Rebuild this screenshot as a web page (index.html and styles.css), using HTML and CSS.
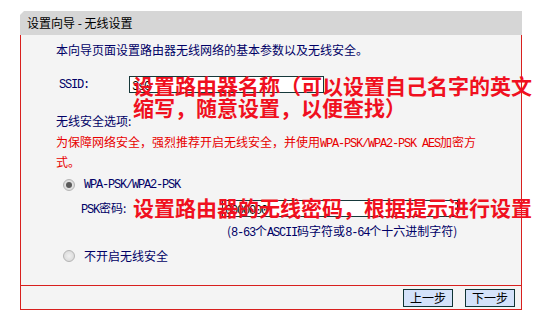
FILE: index.html
```html
<!DOCTYPE html>
<html lang="zh-CN">
<head>
    <meta charset="UTF-8">
    <title>设置向导 - 无线设置</title>
    <link rel="stylesheet" href="styles.css">
</head>
<body>

    <div class="panel">
        <div class="title">设置向导 - 无线设置</div>

        <div class="content">
            <p class="intro">本向导页面设置路由器无线网络的基本参数以及无线安全。</p>

            <div class="row ssid">
                <span class="label en">SSID:</span>
                <span class="box ssid-box"><span class="en">3s0</span></span>
            </div>

            <p class="section">无线安全选项:</p>
            <p class="warn">为保障网络安全，强烈推荐开启无线安全，并使用<span class="en">WPA-PSK/WPA2-PSK AES</span>加密方式。</p>

            <div class="radio-row">
                <span class="radio checked"></span>
                <span class="en">WPA-PSK/WPA2-PSK</span>
            </div>

            <div class="row psk">
                <span class="label"><span class="en">PSK</span>密码:</span>
                <span class="box psk-box"><span class="en">0000000</span></span>
            </div>
            <p class="hint">(<span class="en">8-63</span>个<span class="en">ASCII</span>码字符或<span class="en">8-64</span>个十六进制字符)</p>

            <div class="radio-row off">
                <span class="radio"></span>
                <span>不开启无线安全</span>
            </div>
        </div>

        <div class="footer">
            <button>上一步</button>
            <button>下一步</button>
        </div>

        <!-- 图上的红色说明文字 -->
        <div class="note note-ssid">设置路由器名称（可以设置自己名字的英文<br>缩写，随意设置，以便查找）</div>
        <div class="note note-psk">设置路由器的无线密码，根据提示进行设置</div>
    </div>

</body>
</html>
```

FILE: styles.css
```css
body {
    margin: 0;
    background: #fff;
    font-family: "Noto Sans CJK SC", sans-serif;
    font-size: 12px;
    line-height: 16px;
}
.panel {
    position: relative;
    width: 502px;
    margin: 11px 0 0 20px;
}
.title {
    height: 24px;
    line-height: 24px;
    padding-left: 7px;
    background: #d6d6d6;
    color: #000;
    clip-path: polygon(4px 0, 100% 0, 100% 100%, 0 100%, 0 4px);
}
.content {
    height: 243px;
    padding: 7px 0 0 35px;
    background: #f4f4f4;
    border-left: 1px solid #d8201e;
    border-right: 1px solid #d8201e;
    color: #000066;
}
p {
    margin: 0;
}
.en {
    font-family: "Liberation Mono", monospace;
    font-size: 12px;
    letter-spacing: -1.2px;
}
.row {
    display: flex;
    align-items: center;
    height: 17px;
}
.ssid {
    margin-top: 18px;
    padding-left: 3px;
}
.ssid .label {
    width: 70px;
}
.box {
    height: 15px;
    line-height: 15px;
    border: 1px solid #16383a;
    background: #fff;
    padding-left: 2px;
    color: #000;
}
.ssid-box {
    width: 191px;
}
.section {
    margin-top: 20px;
}
.warn {
    margin-top: 4px;
    width: 425px;
    line-height: 18px;
    color: #e80000;
}
.radio-row {
    display: flex;
    align-items: center;
    gap: 9px;
    height: 16px;
    margin-top: 6px;
    padding-left: 7px;
}
.radio {
    width: 10px;
    height: 10px;
    border-radius: 50%;
    border: 1px solid #b4b4b4;
    background: radial-gradient(circle, #f0f0f0 0, #d4d4d4 100%);
    position: relative;
}
.radio.checked::after {
    content: "";
    position: absolute;
    left: 2px;
    top: 2px;
    width: 6px;
    height: 6px;
    border-radius: 50%;
    background: #5a5a5a;
}
.psk {
    margin-top: 7px;
    padding-left: 25px;
}
.psk .label {
    width: 141px;
}
.psk-box {
    width: 232px;
}
.hint {
    margin-top: 6px;
    padding-left: 171px;
}
.off {
    margin-top: 7px;
}
.footer {
    display: flex;
    justify-content: flex-end;
    gap: 12px;
    height: 25px;
    padding: 3px 6px 0 0;
    box-sizing: border-box;
    background: #f4f4f4;
    border: 1px solid #d8201e;
}
button {
    width: 50px;
    height: 18px;
    padding: 0;
    font-family: "Noto Sans CJK SC", sans-serif;
    font-size: 12px;
    line-height: 16px;
    background: #d4e2fa;
    border: 1px solid #0f3434;
    color: #000;
}
.note {
    position: absolute;
    left: 113px;
    font-size: 21px;
    line-height: 22px;
    font-weight: bold;
    color: #f01020;
    white-space: nowrap;
}
.note-ssid {
    top: 63px;
}
.note-psk {
    top: 185px;
}
```
